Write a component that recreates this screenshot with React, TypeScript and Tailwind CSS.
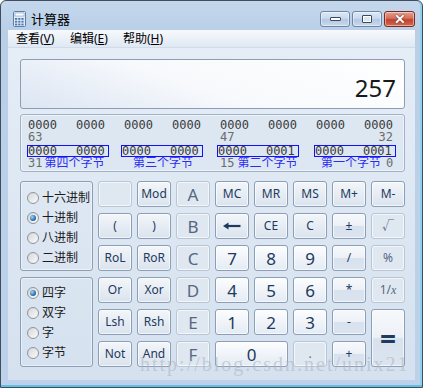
import type { ReactNode } from "react";

/* ── shared font stacks ── */
const ui = "font-['Noto_Sans','Noto_Sans_CJK_SC',sans-serif]";
const mono = "font-['DejaVu_Sans_Mono','Liberation_Mono',monospace]";

type Kind = "fn" | "digit" | "op" | "off" | "eq";

const keyStyles: Record<Kind, string> = {
  fn: "border-[#8c9db6] bg-gradient-to-b from-[#f3f6fa] to-[#dae3ee] text-[#1e3a5c] text-[12px]",
  digit: "border-[#8c9db6] bg-gradient-to-b from-[#fcfdfe] to-[#e4ebf4] text-[#1e3a5c] text-[17px]",
  op: "border-[#8c9db6] bg-[linear-gradient(#f6f8fb_0%,#edf1f7_48%,#d8e2ee_52%,#dbe4ef_100%)] text-[#1e3a5c] text-[12px]",
  off: "border-[#b7c5d7] bg-[#dfe7f1] text-[#56687f] text-[12px]",
  eq: "border-[#8c9db6] bg-[linear-gradient(#f6f8fb_0%,#edf1f7_48%,#d8e2ee_52%,#dbe4ef_100%)] text-[#1e3a5c] text-[12px]",
};

function Key({ kind = "fn", className = "", children }: { kind?: Kind; className?: string; children?: ReactNode }) {
  return (
    <div
      className={`flex items-center justify-center rounded-[3px] border leading-none shadow-[inset_0_0_0_1px_rgba(255,255,255,0.65)] ${keyStyles[kind]} ${className}`}
    >
      {children}
    </div>
  );
}

/* ── radio ── */
function Radio({ label, checked = false }: { label: string; checked?: boolean }) {
  return (
    <div className="flex h-[20px] items-center gap-[3px] text-[12px] text-[#1b1b1b]">
      <span className="flex h-[12px] w-[12px] items-center justify-center rounded-full border border-[#8f9499] bg-gradient-to-br from-[#d4d7da] to-[#fbfbfb]">
        {checked && (
          <span className="h-[6px] w-[6px] rounded-full bg-[radial-gradient(circle_at_35%_35%,#9fd6f7,#1c5fa6_70%)]" />
        )}
      </span>
      <span className="leading-none">{label}</span>
    </div>
  );
}

function BackArrow() {
  return (
    <svg width="18" height="8" viewBox="0 0 18 8" aria-hidden="true">
      <path d="M4 4H17.5" stroke="#1e3a5c" strokeWidth="2.2" />
      <path d="M0 4L5.5 0.5V7.5Z" fill="#1e3a5c" />
    </svg>
  );
}

function AppIcon() {
  return (
    <svg width="13" height="16" viewBox="0 0 13 16" aria-hidden="true">
      <rect x="0.5" y="0.5" width="12" height="15" rx="1" fill="#dfeaf6" stroke="#5b7fa8" />
      <rect x="2" y="2" width="9" height="3" fill="#ffffff" stroke="#7f9cc0" strokeWidth="0.6" />
      {[0, 1, 2].map((r) =>
        [0, 1, 2].map((c) => (
          <rect key={`${r}-${c}`} x={2 + c * 3.2} y={7 + r * 2.8} width="2.2" height="1.8" fill="#4f79ad" />
        ))
      )}
    </svg>
  );
}

function CaptionButton({ children, red = false }: { children: ReactNode; red?: boolean }) {
  return (
    <div
      className={`flex h-[16px] items-center justify-center rounded-[3px] border ${
        red
          ? "w-[31px] border-[#7a2a22] bg-[linear-gradient(#e7a08f_0%,#d2705b_45%,#c0432c_55%,#d66a4e_100%)]"
          : "w-[30px] border-[#6f84a3] bg-[linear-gradient(#dfe9f5_0%,#c9d9ec_45%,#b3c8e2_55%,#c8daee_100%)]"
      } shadow-[inset_0_0_0_1px_rgba(255,255,255,0.45)]`}
    >
      {children}
    </div>
  );
}

const groups = ["0000", "0000", "0000", "0000", "0000", "0000", "0000", "0000"];

function BitPanel() {
  return (
    <div
      className={`flex h-[58px] w-[385px] flex-col rounded-[3px] border border-[#a2b2c7] bg-[#dde7f2] pt-[4px] pl-[7px] text-[12px] leading-[12px] shadow-[inset_0_0_0_1px_rgba(255,255,255,0.5)] ${mono}`}
    >
      <div className="flex text-[#3a3a3a]">
        {groups.map((g, i) => (
          <span key={i} className="w-[48px] shrink-0">
            {g}
          </span>
        ))}
      </div>
      <div className="flex text-[#6b6b6b]">
        <span className="w-[192px] shrink-0">63</span>
        <span className="w-[144px] shrink-0">47</span>
        <span className="w-[29px] shrink-0 text-right">32</span>
      </div>
      <div className="mt-[2px] flex text-[#3a3a3a]">
        {[
          ["0000", "0000"],
          ["0000", "0000"],
          ["0000", "0001"],
          ["0000", "0001"],
        ].map(([a, b], i) => (
          <div key={i} className={`w-[96px] shrink-0 ${i === 1 ? "-ml-[2px] pr-[2px]" : ""} ${i === 3 ? "ml-[1px] -mr-[1px]" : ""}`}>
            <div className="-ml-[1px] flex h-[12px] w-[82px] items-center border border-[#1010ff]">
              <span>{a}</span>
              <span className="ml-[19px]">{b}</span>
            </div>
          </div>
        ))}
      </div>
      <div className={`flex leading-[12px]`}>
        <div className="flex w-[96px] shrink-0">
          <span className="text-[#6b6b6b]">31</span>
          <span className={`ml-[2px] text-[#2b2bf5] ${ui}`}>第四个字节</span>
        </div>
        <div className="w-[96px] shrink-0 pl-[9px]">
          <span className={`text-[#2b2bf5] ${ui}`}>第三个字节</span>
        </div>
        <div className="flex w-[96px] shrink-0">
          <span className="text-[#6b6b6b]">15</span>
          <span className={`ml-[3px] text-[#2b2bf5] ${ui}`}>第二个字节</span>
        </div>
        <div className="flex w-[90px] shrink-0 pl-[5px]">
          <span className={`text-[#2b2bf5] ${ui}`}>第一个字节</span>
          <span className="ml-[5px] text-[#6b6b6b]">0</span>
        </div>
      </div>
    </div>
  );
}

export default function App() {
  return (
    <div className={`relative h-[388px] w-[423px] overflow-hidden ${ui}`}>
      {/* ── window frame ── */}
      <div className="flex h-full w-full flex-col rounded-t-[6px] border border-[#404d5c] bg-[linear-gradient(#c4d7ec_0%,#b9cfe8_8%,#bdd2ea_100%)] px-[7px] pb-[7px] shadow-[inset_0_-2px_0_#5ebfe3,inset_-2px_0_0_#8fd0ea]">
        {/* title bar */}
        <div className="flex h-[29px] shrink-0 items-start pt-[10px]">
          <div className="ml-[5px] flex items-center">
            <AppIcon />
            <span className="ml-[5px] text-[13px] leading-[15px] text-black">计算器</span>
          </div>
          <div className="ml-auto flex gap-[2px]">
            <CaptionButton>
              <span className="h-[4px] w-[11px] rounded-[1px] border border-[#394a60] bg-white" />
            </CaptionButton>
            <CaptionButton>
              <span className="h-[8px] w-[10px] rounded-[1px] border border-[#394a60] bg-[#dce6f2] shadow-[inset_0_0_0_1px_#ffffff]" />
            </CaptionButton>
            <CaptionButton red>
              <span className="text-[14px] font-bold leading-none text-white [text-shadow:0_0_1px_#4a1510,0_0_1px_#4a1510]">
                ✕
              </span>
            </CaptionButton>
          </div>
        </div>

        {/* client area */}
        <div className="flex flex-1 flex-col bg-gradient-to-b from-[#e6eef7] to-[#d5e1ef]">
          {/* menu bar */}
          <div className="flex h-[18px] shrink-0 items-center border-b border-[#d1dcea] bg-gradient-to-b from-[#f7f9fc] to-[#dfe8f3] pl-[8px] text-[12px] leading-none text-black">
            <span className="w-[54px]">
              查看(<span className="underline">V</span>)
            </span>
            <span className="w-[53px]">
              编辑(<span className="underline">E</span>)
            </span>
            <span>
              帮助(<span className="underline">H</span>)
            </span>
          </div>

          <div className="flex flex-col pl-[12px] pt-[11px]">
            {/* display */}
            <div className="flex h-[50px] w-[385px] items-end justify-end rounded-[3px] border border-[#8e9db3] bg-[linear-gradient(20deg,#dbe5f3_0%,#f7f9fc_45%,#ffffff_100%)] pb-[8px] pr-[8px]">
              <span className="text-[24px] leading-none text-[#1a1a1a]">257</span>
            </div>

            <div className="mt-[5px]">
              <BitPanel />
            </div>

            {/* keypad */}
            <div className="mt-[9px] grid grid-cols-[73px_repeat(8,34px)] grid-rows-[repeat(6,26px)] gap-x-[5px] gap-y-[6px]">
              <div className="row-span-3 flex flex-col rounded-[3px] border border-[#8c9db6] pl-[6px] pt-[6px] shadow-[inset_0_0_0_1px_rgba(255,255,255,0.45)]">
                <Radio label="十六进制" />
                <Radio label="十进制" checked />
                <Radio label="八进制" />
                <Radio label="二进制" />
              </div>
              <Key kind="off" />
              <Key>Mod</Key>
              <Key kind="off" className="text-[17px]">A</Key>
              <Key>MC</Key>
              <Key>MR</Key>
              <Key>MS</Key>
              <Key>M+</Key>
              <Key>M-</Key>

              <Key>(</Key>
              <Key>)</Key>
              <Key kind="off" className="text-[17px]">B</Key>
              <Key>
                <BackArrow />
              </Key>
              <Key>CE</Key>
              <Key>C</Key>
              <Key kind="op">±</Key>
              <Key kind="off">√</Key>

              <Key>RoL</Key>
              <Key>RoR</Key>
              <Key kind="off" className="text-[17px]">C</Key>
              <Key kind="digit">7</Key>
              <Key kind="digit">8</Key>
              <Key kind="digit">9</Key>
              <Key kind="op">/</Key>
              <Key kind="off">%</Key>

              <div className="row-span-3 flex flex-col rounded-[3px] border border-[#8c9db6] pl-[6px] pt-[5px] shadow-[inset_0_0_0_1px_rgba(255,255,255,0.45)]">
                <Radio label="四字" checked />
                <Radio label="双字" />
                <Radio label="字" />
                <Radio label="字节" />
              </div>
              <Key>Or</Key>
              <Key>Xor</Key>
              <Key kind="off" className="text-[17px]">D</Key>
              <Key kind="digit">4</Key>
              <Key kind="digit">5</Key>
              <Key kind="digit">6</Key>
              <Key kind="op">*</Key>
              <Key kind="off">
                1/<span className="font-['Liberation_Serif',serif] italic">x</span>
              </Key>

              <Key>Lsh</Key>
              <Key>Rsh</Key>
              <Key kind="off" className="text-[17px]">E</Key>
              <Key kind="digit">1</Key>
              <Key kind="digit">2</Key>
              <Key kind="digit">3</Key>
              <Key kind="op">-</Key>
              <Key kind="eq" className="row-span-2">
                <span className="text-[28px] font-bold leading-none">=</span>
              </Key>

              <Key>Not</Key>
              <Key>And</Key>
              <Key kind="off" className="text-[17px]">F</Key>
              <Key kind="digit" className="col-span-2">0</Key>
              <Key kind="off">.</Key>
              <Key kind="op">+</Key>
            </div>
          </div>
        </div>
      </div>

      {/* ── blog watermark over the keypad ── */}
      <span className="pointer-events-none absolute left-[140px] top-[352px] font-['Liberation_Serif',serif] text-[20px] leading-[24px] tracking-[2px] text-[#aeb7c2]/60">
        http://blog.csdn.net/unix21
      </span>
    </div>
  );
}
